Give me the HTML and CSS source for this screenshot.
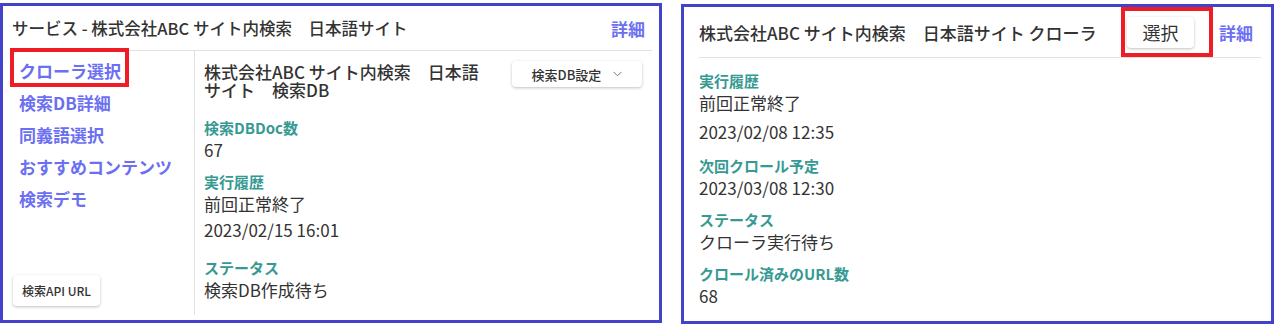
FILE: index.html
```html
<!DOCTYPE html>
<html lang="ja">

<head>
    <meta charset="UTF-8">
    <meta name="viewport" content="width=device-width, initial-scale=1.0">
    <title>サイト内検索</title>
    <link rel="stylesheet" href="styles.css">
</head>

<body>
    <div class="panel panel-service">
        <div class="panel-header">
            <h2>サービス - 株式会社ABC サイト内検索　日本語サイト</h2>
            <a href="#" class="link-detail">詳細</a>
        </div>
        <div class="service-body">
            <!-- Side menu -->
            <nav class="side-nav">
                <a href="#" class="nav-link">クローラ選択</a>
                <a href="#" class="nav-link">検索DB詳細</a>
                <a href="#" class="nav-link">同義語選択</a>
                <a href="#" class="nav-link">おすすめコンテンツ</a>
                <a href="#" class="nav-link">検索デモ</a>
                <button class="btn btn-small btn-api">検索API URL</button>
                <span class="mark mark-nav"></span>
            </nav>
            <div class="db-info">
                <div class="db-top">
                    <h3>株式会社ABC サイト内検索　日本語サイト　検索DB</h3>
                    <button class="btn btn-dropdown">検索DB設定
                        <svg width="9" height="6" viewBox="0 0 9 6"><path d="M0.5 0.8 L4.5 4.8 L8.5 0.8" fill="none" stroke="#777" stroke-width="1"/></svg>
                    </button>
                </div>
                <dl class="fields fields-db">
                    <div class="field">
                        <dt>検索DBDoc数</dt>
                        <dd>67</dd>
                    </div>
                    <div class="field">
                        <dt>実行履歴</dt>
                        <dd>前回正常終了</dd>
                        <dd class="date">2023/02/15 16:01</dd>
                    </div>
                    <div class="field">
                        <dt>ステータス</dt>
                        <dd>検索DB作成待ち</dd>
                    </div>
                </dl>
            </div>
        </div>
    </div>

    <div class="panel panel-crawler">
        <div class="panel-header">
            <h2>株式会社ABC サイト内検索　日本語サイト クローラ</h2>
            <button class="btn btn-select">選択</button>
            <a href="#" class="link-detail">詳細</a>
            <span class="mark mark-select"></span>
        </div>
        <dl class="fields fields-crawler">
            <div class="field">
                <dt>実行履歴</dt>
                <dd>前回正常終了</dd>
                <dd class="date">2023/02/08 12:35</dd>
            </div>
            <div class="field">
                <dt>次回クロール予定</dt>
                <dd>2023/03/08 12:30</dd>
            </div>
            <div class="field">
                <dt>ステータス</dt>
                <dd>クローラ実行待ち</dd>
            </div>
            <div class="field">
                <dt>クロール済みのURL数</dt>
                <dd>68</dd>
            </div>
        </dl>
    </div>
</body>

</html>
```

FILE: styles.css
```css
* {
    box-sizing: border-box;
    margin: 0;
    padding: 0;
}

body {
    font-family: "Noto Sans CJK JP", "Noto Sans", sans-serif;
    color: #333;
    background-color: #ffffff;
    display: flex;
    align-items: flex-start;
    gap: 19px;
    padding-top: 3px;
}

.panel {
    border: 3px solid #4343c9;
    background-color: #ffffff;
    height: 320px;
}

.panel-service {
    width: 662px;
    padding: 0 7px 0 9px;
}

.panel-crawler {
    width: 593px;
    margin-top: 1px;
    padding: 0 10px 0 15px;
}

/* Header row */
.panel-header {
    position: relative;
    display: flex;
    align-items: center;
    border-bottom: 1px solid #e2e2e2;
}

.panel-service .panel-header {
    height: 45px;
    padding-right: 7px;
}

.panel-crawler .panel-header {
    height: 51px;
    padding-right: 8px;
}

.panel-header h2 {
    flex: 1;
    font-size: 17px;
    font-weight: 500;
    color: #333;
}

.panel-service .panel-header h2 {
    font-size: 16.5px;
}

.link-detail {
    color: #6b6ff2;
    font-size: 17px;
    font-weight: 700;
    text-decoration: none;
}

.btn {
    font-family: inherit;
    color: #333;
    background-color: #ffffff;
    border: none;
    border-radius: 4px;
    box-shadow: 0 1px 3px rgba(0, 0, 0, 0.25);
    cursor: pointer;
}

.btn-small {
    font-size: 12px;
    font-weight: 500;
}

.btn-select {
    width: 67px;
    height: 31px;
    font-size: 18px;
    margin: 0 25px 0 0;
}

/* Red annotation boxes */
.mark {
    position: absolute;
    border: 4px solid #ee1c24;
    pointer-events: none;
}

.mark-select {
    left: 422px;
    top: 0;
    width: 92px;
    height: 50px;
}

.mark-nav {
    left: -2px;
    top: -3px;
    width: 119px;
    height: 39px;
}

/* Service body */
.service-body {
    display: flex;
    height: 264px;
}

.side-nav {
    position: relative;
    width: 183px;
    border-right: 1px solid #e2e2e2;
    display: flex;
    flex-direction: column;
    gap: 10px;
    padding: 9px 0 9px 7px;
}

.nav-link {
    color: #6b6ff2;
    font-size: 17px;
    font-weight: 700;
    line-height: 22px;
    text-decoration: none;
}

.btn-api {
    margin-top: auto;
    margin-left: -6px;
    width: 87px;
    height: 31px;
}

.db-info {
    flex: 1;
    padding: 10px 10px 0 9px;
}

.db-top {
    display: flex;
    align-items: flex-start;
    gap: 30px;
}

.db-top h3 {
    flex: 1;
    font-size: 17px;
    font-weight: 500;
    line-height: 18px;
    padding-top: 2px;
}

.btn-dropdown {
    width: 130px;
    height: 26px;
    font-size: 13px;
    font-weight: 500;
    display: flex;
    align-items: center;
    justify-content: center;
    gap: 12px;
}

/* Label / value lists */
.fields {
    display: flex;
    flex-direction: column;
    gap: 10px;
}

.fields dt {
    color: #369a92;
    font-size: 15px;
    font-weight: 700;
    line-height: 21px;
}

.fields dd {
    font-size: 17px;
    line-height: 23px;
}

.fields-db {
    margin-top: 18px;
}

.fields-db .date {
    margin-top: 3px;
    margin-bottom: 6px;
}

.fields-crawler {
    padding-top: 12px;
}

.fields-crawler .date {
    margin-top: 6px;
    margin-bottom: 2px;
}
```
